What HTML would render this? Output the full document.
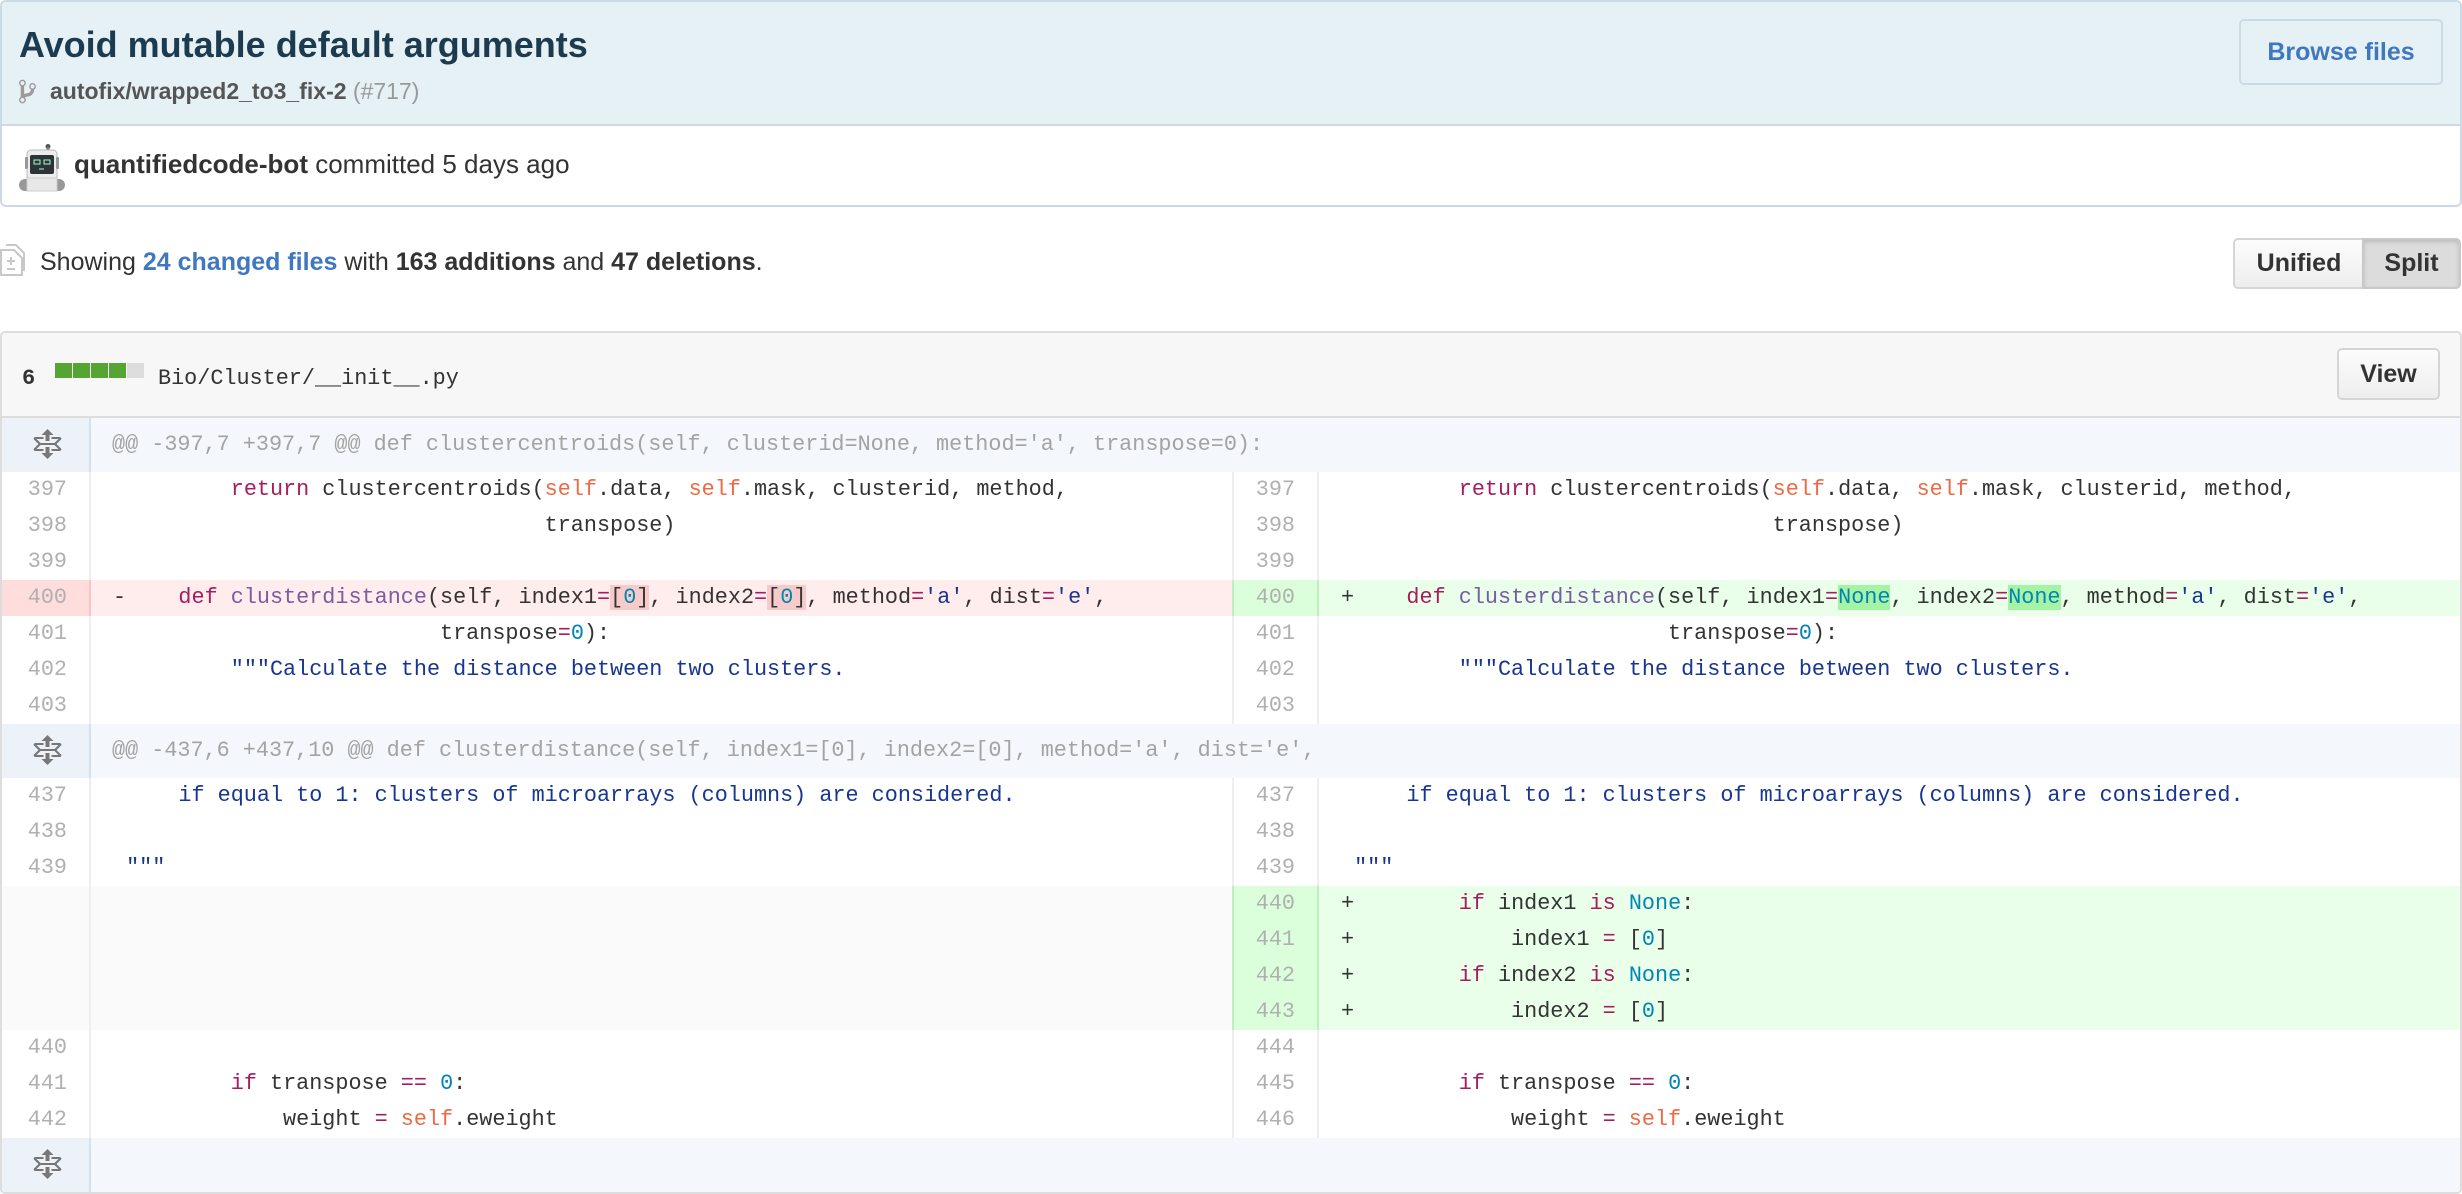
<!DOCTYPE html>
<html><head><meta charset="utf-8"><style>
*{box-sizing:border-box;margin:0;padding:0}
body{width:2462px;height:1194px;background:#fff;position:relative;overflow:hidden;font-family:"Liberation Sans",Arial,sans-serif;color:#333}
.abs{position:absolute}
.hdr{left:0;top:0;width:2462px;height:207px;border:2px solid #cbdbe5;border-radius:6px;overflow:hidden}
.blue{left:0;top:0;width:100%;height:124px;background:#e6f1f6;border-bottom:2px solid #cbdbe5}
.btn{border-radius:5px;font-weight:bold;font-size:25px;text-align:center}
.mono{font-family:"Liberation Mono","DejaVu Sans Mono",monospace}
.box{left:0;top:331px;width:2462px;height:863px;border:2px solid #ddd;border-radius:5px;overflow:hidden}
.row{position:absolute;left:0;width:2460px;height:36px;font-family:"Liberation Mono",monospace;font-size:21.8px;line-height:36px;white-space:pre}
.row>div{position:absolute;top:0;height:100%}
.g1{left:0;width:89px;text-align:right;padding-right:22px;color:#b0b0b0;border-right:2px solid #eee}
.c1{left:89px;width:1141px;padding-left:22px}
.g2{left:1230px;width:87px;text-align:right;padding-right:22px;color:#b0b0b0;border-left:2px solid #eee;border-right:2px solid #eee}
.c2{left:1317px;width:1145px;padding-left:22px}
.hunk{position:absolute;left:0;width:2460px;height:54px;background:#f4f7fb;font-family:"Liberation Mono",monospace;font-size:21.8px;line-height:54px;color:#a3a3a3;white-space:pre}
.hunk .hg{position:absolute;left:0;top:0;width:89px;height:54px;background:#edf2f9;border-right:2px solid #d5e1ee}
.hunk .hg svg{position:absolute;left:31px;top:11px}
.hunk .ht{position:absolute;left:110px;top:0}
.del .g1{background:#ffdddd;border-color:#f5c6c6}.del .c1{background:#ffecec}
.add .g2{background:#dbffdb;border-color:#c0eec0}.add .c2{background:#eaffea}
.emp .g1,.emp .c1{background:#fafafa}
.k{color:#a71d5d}.f{color:#795da3}.s{color:#ed6a43}.n{color:#0086b3}.q{color:#183691}
.xd{background:#f8cbcb}.xa{background:#a6f3a6}
</style></head><body>

<div class="abs hdr">
  <div class="abs blue"></div>
  <div class="abs" style="left:17px;top:22px;font-size:36px;font-weight:bold;color:#1d3b4e;line-height:42px">Avoid mutable default arguments</div>
  <svg class="abs" style="left:17px;top:76px" width="17" height="27" viewBox="0 0 10 16"><path fill="#9a9a9a" d="M10 5c0-1.11-.89-2-2-2a1.993 1.993 0 0 0-1 3.72v.3c-.02.52-.23.98-.63 1.38-.4.4-.86.61-1.38.63-.83.02-1.480.16-2 .45V4.72a1.993 1.993 0 0 0-1-3.72C.88 1 0 1.890 0 3a2 2 0 0 0 1 1.72v6.56c-.59.35-1 .99-1 1.72 0 1.11.89 2 2 2 1.11 0 2-.89 2-2 0-.53-.2-1-.53-1.36.09-.06.48-.41.59-.47.25-.11.56-.17.94-.17 1.05-.05 1.95-.45 2.75-1.25S8.95 7.77 9 6.730h-.02C9.59 6.37 10 5.73 10 5zM2 1.8c.66 0 1.2.55 1.2 1.2 0 .65-.55 1.2-1.2 1.2C1.35 4.2.8 3.65.8 3c0-.65.55-1.2 1.2-1.2zm0 12.41c-.66 0-1.2-.55-1.2-1.2 0-.65.55-1.2 1.2-1.2.65 0 1.2.55 1.2 1.2 0 .65-.55 1.2-1.2 1.2zm6-8c-.66 0-1.2-.55-1.2-1.2 0-.65.55-1.2 1.2-1.2.65 0 1.2.55 1.2 1.2 0 .65-.55 1.2-1.2 1.2z"/></svg>
  <div class="abs" style="left:48px;top:75px;font-size:23px;line-height:28px;color:#555"><b>autofix/wrapped2_to3_fix-2</b> <span style="color:#999">(#717)</span></div>
  <div class="abs btn" style="left:2237px;top:17px;width:204px;height:66px;border:2px solid #cbdbe5;background:#e6f1f6;color:#4078c0;line-height:62px">Browse files</div>
  <svg class="abs" style="left:15px;top:141px" width="50" height="49" viewBox="0 0 50 49">
    <circle cx="31" cy="3.5" r="2.5" fill="#555"/>
    <rect x="29.5" y="4" width="3" height="5" fill="#777"/>
    <rect x="10" y="7" width="30" height="33" rx="4" fill="#ececec" stroke="#bbb"/>
    <rect x="8" y="14" width="3" height="12" rx="1" fill="#999"/><rect x="39" y="14" width="3" height="12" rx="1" fill="#999"/>
    <rect x="13" y="12" width="24" height="19" rx="2" fill="#2e3338"/>
    <path d="M17 17h6v4h-6zM27 17h6v4h-6zM22 26h5" stroke="#9fc" stroke-width="1" fill="none"/>
    <rect x="2" y="36" width="46" height="12" rx="6" fill="#999"/>
    <rect x="10" y="35" width="30" height="13" fill="#e8e8e8" stroke="#ccc"/>
  </svg>
  <div class="abs" style="left:72px;top:146px;font-size:26px;line-height:32px;color:#333"><b>quantifiedcode-bot</b> committed 5 days ago</div>
</div>

<svg class="abs" style="left:0;top:244px" width="26" height="32" viewBox="0 0 26 32"><path d="M6 1h10l8 8v18M1 6h13l8 8v17H1z" fill="#fff" stroke="#c8c8c8" stroke-width="2"/><path d="M11 13v8M7 17h8M7 25h8" stroke="#c8c8c8" stroke-width="2"/></svg>
<div class="abs" style="left:40px;top:246px;font-size:25px;line-height:32px;color:#333">Showing <b style="color:#4078c0">24 changed files</b> with <b>163 additions</b> and <b>47 deletions</b>.</div>
<div class="abs btn" style="left:2233px;top:238px;width:130px;height:51px;border:2px solid #d5d5d5;border-right:none;border-radius:5px 0 0 5px;background:linear-gradient(#fcfcfc,#eee);line-height:47px">Unified</div>
<div class="abs btn" style="left:2362px;top:238px;width:99px;height:51px;border:2px solid #c8c8c8;border-radius:0 5px 5px 0;background:#dcdcdc;box-shadow:inset 0 2px 4px rgba(0,0,0,.15);line-height:47px">Split</div>

<div class="abs box">
  <div class="abs" style="left:0;top:0;width:2460px;height:85px;background:#f7f7f7;border-bottom:2px solid #ddd"></div>
  <div class="abs mono" style="left:20px;top:33px;font-size:22px;font-weight:bold;line-height:26px;color:#333">6</div>
  <div class="abs" style="left:53px;top:30px;width:17px;height:15px;background:#55a532"></div>
  <div class="abs" style="left:71px;top:30px;width:17px;height:15px;background:#55a532"></div>
  <div class="abs" style="left:89px;top:30px;width:17px;height:15px;background:#55a532"></div>
  <div class="abs" style="left:107px;top:30px;width:17px;height:15px;background:#55a532"></div>
  <div class="abs" style="left:125px;top:30px;width:17px;height:15px;background:#ddd"></div>
  <div class="abs mono" style="left:156px;top:33px;font-size:21.8px;line-height:26px;color:#333">Bio/Cluster/__init__.py</div>
  <div class="abs btn" style="left:2335px;top:15px;width:103px;height:52px;border:2px solid #d5d5d5;background:linear-gradient(#fcfcfc,#eee);line-height:48px">View</div>

  <div class="hunk" style="top:85px"><div class="hg"><svg width="29" height="32" viewBox="0 0 14 16"><path fill="#777" d="M11.5 7.5L14 10c0 .55-.45 1-1 1H9v-1h3.5l-2-2h-7l-2 2H5v1H1c-.55 0-1-.45-1-1l2.5-2.5L0 5c0-.55.45-1 1-1h4v1H1.5l2 2h7l2-2H9V4h4c.55 0 1 .45 1 1l-2.5 2.5zM6 6h2V3h2L7 0 4 3h2v3zm2 3H6v3H4l3 3 3-3H8V9z"/></svg></div><div class="ht">@@ -397,7 +397,7 @@ def clustercentroids(self, clusterid=None, method='a', transpose=0):</div></div>

  <div class="row" style="top:139px"><div class="g1">397</div><div class="c1">         <span class="k">return</span> clustercentroids(<span class="s">self</span>.data, <span class="s">self</span>.mask, clusterid, method,</div><div class="g2">397</div><div class="c2">         <span class="k">return</span> clustercentroids(<span class="s">self</span>.data, <span class="s">self</span>.mask, clusterid, method,</div></div>
  <div class="row" style="top:175px"><div class="g1">398</div><div class="c1">                                 transpose)</div><div class="g2">398</div><div class="c2">                                 transpose)</div></div>
  <div class="row" style="top:211px"><div class="g1">399</div><div class="c1"> </div><div class="g2">399</div><div class="c2"> </div></div>
  <div class="row del add" style="top:247px"><div class="g1">400</div><div class="c1">-    <span class="k">def</span> <span class="f">clusterdistance</span>(self, index1<span class="k">=</span><span class="xd">[<span class="n">0</span>]</span>, index2<span class="k">=</span><span class="xd">[<span class="n">0</span>]</span>, method<span class="k">=</span><span class="q">'a'</span>, dist<span class="k">=</span><span class="q">'e'</span>,</div><div class="g2">400</div><div class="c2">+    <span class="k">def</span> <span class="f">clusterdistance</span>(self, index1<span class="k">=</span><span class="xa"><span class="n">None</span></span>, index2<span class="k">=</span><span class="xa"><span class="n">None</span></span>, method<span class="k">=</span><span class="q">'a'</span>, dist<span class="k">=</span><span class="q">'e'</span>,</div></div>
  <div class="row" style="top:283px"><div class="g1">401</div><div class="c1">                         transpose<span class="k">=</span><span class="n">0</span>):</div><div class="g2">401</div><div class="c2">                         transpose<span class="k">=</span><span class="n">0</span>):</div></div>
  <div class="row" style="top:319px"><div class="g1">402</div><div class="c1">         <span class="q">"""Calculate the distance between two clusters.</span></div><div class="g2">402</div><div class="c2">         <span class="q">"""Calculate the distance between two clusters.</span></div></div>
  <div class="row" style="top:355px"><div class="g1">403</div><div class="c1"> </div><div class="g2">403</div><div class="c2"> </div></div>

  <div class="hunk" style="top:391px"><div class="hg"><svg width="29" height="32" viewBox="0 0 14 16"><path fill="#777" d="M11.5 7.5L14 10c0 .55-.45 1-1 1H9v-1h3.5l-2-2h-7l-2 2H5v1H1c-.55 0-1-.45-1-1l2.5-2.5L0 5c0-.55.45-1 1-1h4v1H1.5l2 2h7l2-2H9V4h4c.55 0 1 .45 1 1l-2.5 2.5zM6 6h2V3h2L7 0 4 3h2v3zm2 3H6v3H4l3 3 3-3H8V9z"/></svg></div><div class="ht">@@ -437,6 +437,10 @@ def clusterdistance(self, index1=[0], index2=[0], method='a', dist='e',</div></div>

  <div class="row" style="top:445px"><div class="g1">437</div><div class="c1">     <span class="q">if equal to 1: clusters of microarrays (columns) are considered.</span></div><div class="g2">437</div><div class="c2">     <span class="q">if equal to 1: clusters of microarrays (columns) are considered.</span></div></div>
  <div class="row" style="top:481px"><div class="g1">438</div><div class="c1"> </div><div class="g2">438</div><div class="c2"> </div></div>
  <div class="row" style="top:517px"><div class="g1">439</div><div class="c1"> <span class="q">"""</span></div><div class="g2">439</div><div class="c2"> <span class="q">"""</span></div></div>
  <div class="row emp add" style="top:553px"><div class="g1"></div><div class="c1"></div><div class="g2">440</div><div class="c2">+        <span class="k">if</span> index1 <span class="k">is</span> <span class="n">None</span>:</div></div>
  <div class="row emp add" style="top:589px"><div class="g1"></div><div class="c1"></div><div class="g2">441</div><div class="c2">+            index1 <span class="k">=</span> [<span class="n">0</span>]</div></div>
  <div class="row emp add" style="top:625px"><div class="g1"></div><div class="c1"></div><div class="g2">442</div><div class="c2">+        <span class="k">if</span> index2 <span class="k">is</span> <span class="n">None</span>:</div></div>
  <div class="row emp add" style="top:661px"><div class="g1"></div><div class="c1"></div><div class="g2">443</div><div class="c2">+            index2 <span class="k">=</span> [<span class="n">0</span>]</div></div>
  <div class="row" style="top:697px"><div class="g1">440</div><div class="c1"> </div><div class="g2">444</div><div class="c2"> </div></div>
  <div class="row" style="top:733px"><div class="g1">441</div><div class="c1">         <span class="k">if</span> transpose <span class="k">==</span> <span class="n">0</span>:</div><div class="g2">445</div><div class="c2">         <span class="k">if</span> transpose <span class="k">==</span> <span class="n">0</span>:</div></div>
  <div class="row" style="top:769px"><div class="g1">442</div><div class="c1">             weight <span class="k">=</span> <span class="s">self</span>.eweight</div><div class="g2">446</div><div class="c2">             weight <span class="k">=</span> <span class="s">self</span>.eweight</div></div>

  <div class="hunk" style="top:805px"><div class="hg"><svg width="29" height="32" viewBox="0 0 14 16"><path fill="#777" d="M11.5 7.5L14 10c0 .55-.45 1-1 1H9v-1h3.5l-2-2h-7l-2 2H5v1H1c-.55 0-1-.45-1-1l2.5-2.5L0 5c0-.55.45-1 1-1h4v1H1.5l2 2h7l2-2H9V4h4c.55 0 1 .45 1 1l-2.5 2.5zM6 6h2V3h2L7 0 4 3h2v3zm2 3H6v3H4l3 3 3-3H8V9z"/></svg></div></div>
</div>
</body></html>
